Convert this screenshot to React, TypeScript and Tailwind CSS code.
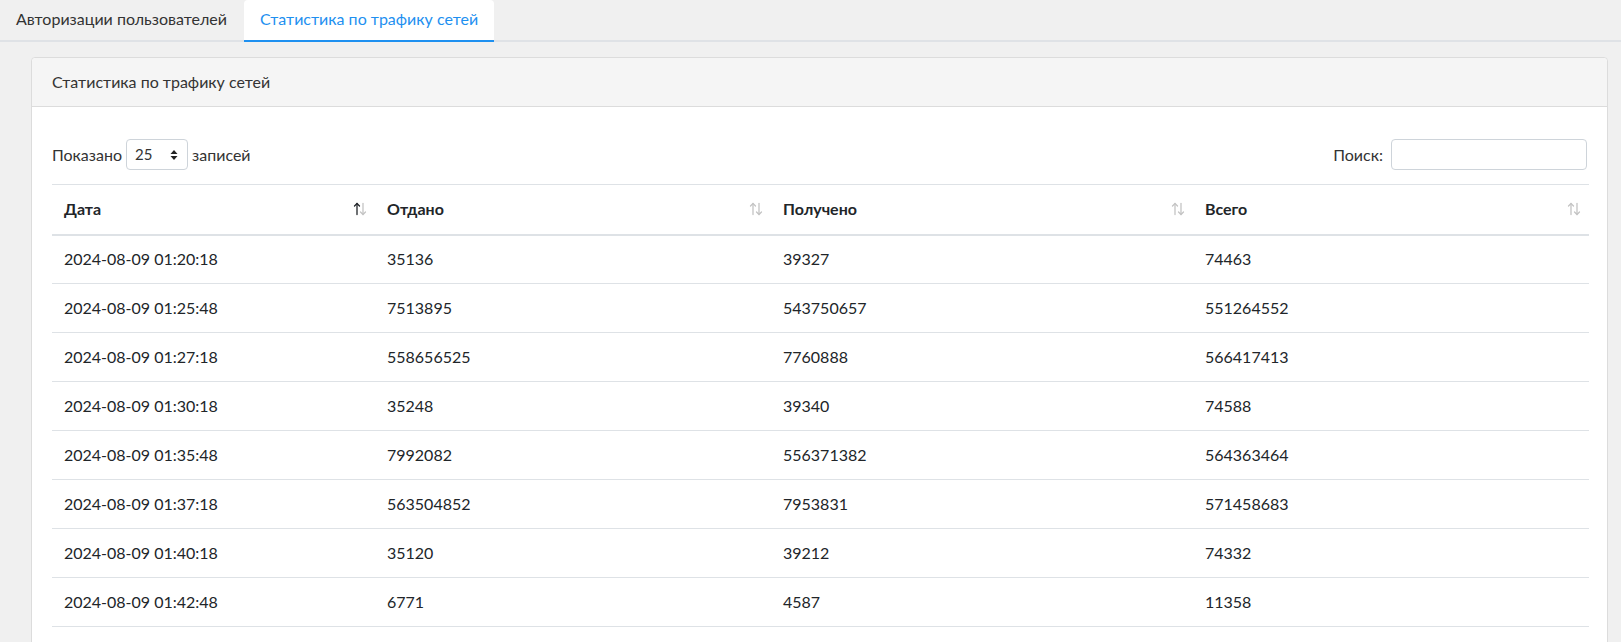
const rows = [
  ['2024-08-09 01:20:18', '35136', '39327', '74463'],
  ['2024-08-09 01:25:48', '7513895', '543750657', '551264552'],
  ['2024-08-09 01:27:18', '558656525', '7760888', '566417413'],
  ['2024-08-09 01:30:18', '35248', '39340', '74588'],
  ['2024-08-09 01:35:48', '7992082', '556371382', '564363464'],
  ['2024-08-09 01:37:18', '563504852', '7953831', '571458683'],
  ['2024-08-09 01:40:18', '35120', '39212', '74332'],
  ['2024-08-09 01:42:48', '6771', '4587', '11358'],
];

const columns = ['Дата', 'Отдано', 'Получено', 'Всего'];

function SortIcon({ active }: { active?: boolean }) {
  return (
    <svg width="14" height="14" viewBox="0 0 14 14" fill="none" strokeWidth="1.3" strokeLinecap="round" strokeLinejoin="round">
      <g stroke={active ? '#212529' : '#c4c4c4'}>
        <path d="M4 12.5V1.5" />
        <path d="M1.5 4L4 1.5L6.5 4" />
      </g>
      <g stroke="#c4c4c4">
        <path d="M10 1.5V12.5" />
        <path d="M7.5 10L10 12.5L12.5 10" />
      </g>
    </svg>
  );
}

export default function App() {
  return (
    <div className="min-h-[642px] bg-[#f0f0f0] text-[#333] font-['Lato','Noto_Sans',sans-serif]">
      {/* Tabs */}
      <div className="flex h-[42px] border-b-2 border-[#dfe2e6]">
        <div className="px-4 pt-[7px] text-[16px] text-[#333] cursor-pointer">Авторизации пользователей</div>
        <div className="ml-px px-4 pt-[7px] text-[16px] text-[#1e90f0] bg-white rounded-t-[4px] border-b-2 border-[#1e90f0] -mb-[2px] cursor-pointer">
          Статистика по трафику сетей
        </div>
      </div>

      {/* Card */}
      <div className="ml-[31px] mr-[13px] mt-[15px] bg-white border border-[#dcdcdc] rounded-[4px]">
        <div className="h-[49px] px-5 flex items-center bg-[#f5f5f5] border-b border-[#dcdcdc] rounded-t-[4px] text-[16px] text-[#333]">
          Статистика по трафику сетей
        </div>
        <div className="px-5 pt-[32px] pb-5">
          <div className="flex items-center justify-between h-[31px] mb-[14px] text-[16px]">
            <div className="flex items-center gap-[4px]">
              <span>Показано</span>
              <div className="w-[62px] h-[31px] border border-[#ced4da] rounded-[4px] flex items-center justify-between pl-[8px] pr-[9px] text-[15px] text-[#333]">
                <span>25</span>
                <svg width="8" height="12" viewBox="0 0 8 12"><path d="M4 1L7.5 5H0.5Z" fill="#222" /><path d="M4 11L0.5 7H7.5Z" fill="#222" /></svg>
              </div>
              <span>записей</span>
            </div>
            <div className="flex items-center gap-[8px]">
              <span>Поиск:</span>
              <input className="w-[196px] h-[31px] border border-[#ced4da] rounded-[4px] outline-none px-2" />
            </div>
          </div>

          <table className="w-full table-fixed border-collapse text-[16px] text-[#212529]">
            <colgroup>
              <col className="w-[323px]" />
              <col className="w-[396px]" />
              <col className="w-[422px]" />
              <col className="w-[396px]" />
            </colgroup>
            <thead>
              <tr className="border-t border-b-2 border-t-[#dee2e6] border-b-[#dee2e6]">
                {columns.map((c, i) => (
                  <th key={c} className="h-[50px] pl-3 pr-[8px] pb-px text-left font-bold leading-6">
                    <div className="flex items-center justify-between">
                      <span>{c}</span>
                      <SortIcon active={i === 0} />
                    </div>
                  </th>
                ))}
              </tr>
            </thead>
            <tbody>
              {rows.map((r, i) => (
                <tr key={i} className="border-b border-[#dee2e6]">
                  {r.map((v, j) => (
                    <td key={j} className="h-[49px] px-3 leading-6">{v}</td>
                  ))}
                </tr>
              ))}
            </tbody>
          </table>
        </div>
      </div>
    </div>
  );
}
